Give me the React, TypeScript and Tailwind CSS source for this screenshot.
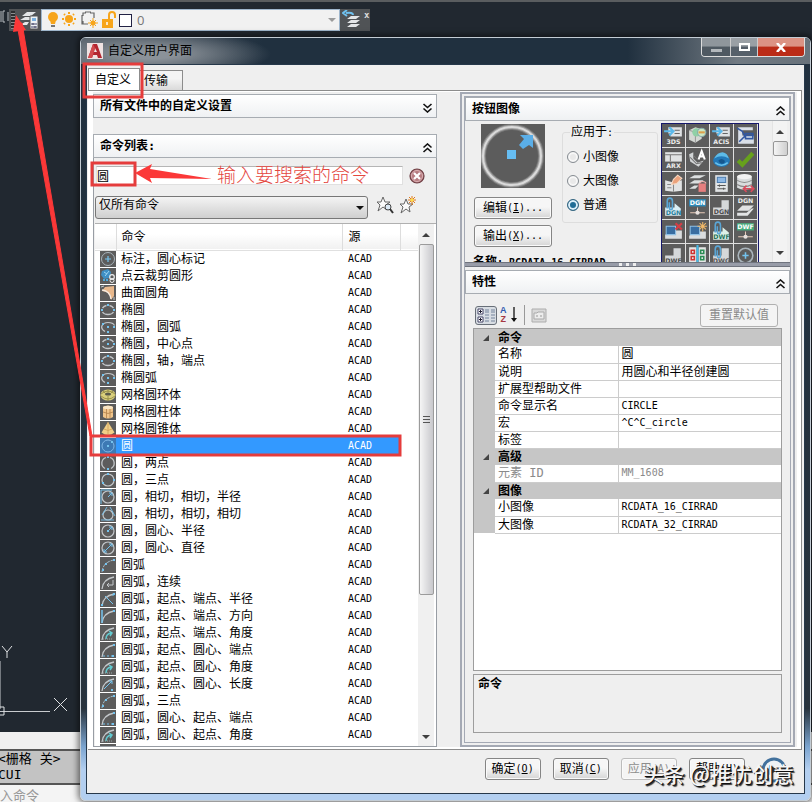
import type { ReactNode } from 'react';

type Glyph =
  | 'mark' | 'cloud' | 'fillet' | 'ellipse' | 'ellipseArc' | 'ellipseCenter'
  | 'torus' | 'cylinder' | 'cone' | 'circle' | 'circle2' | 'circle3'
  | 'ttr' | 'ttt' | 'radius' | 'diameter' | 'arc3' | 'arcCont' | 'arcRadius'
  | 'arcDir' | 'arcAngle' | 'arcEnd' | 'arcLength';

const commands: { name: string; glyph: Glyph }[] = [
  { name: '标注，圆心标记', glyph: 'mark' },
  { name: '点云裁剪圆形', glyph: 'cloud' },
  { name: '曲面圆角', glyph: 'fillet' },
  { name: '椭圆', glyph: 'ellipse' },
  { name: '椭圆，圆弧', glyph: 'ellipseArc' },
  { name: '椭圆，中心点', glyph: 'ellipseCenter' },
  { name: '椭圆，轴，端点', glyph: 'ellipse' },
  { name: '椭圆弧', glyph: 'ellipseArc' },
  { name: '网格圆环体', glyph: 'torus' },
  { name: '网格圆柱体', glyph: 'cylinder' },
  { name: '网格圆锥体', glyph: 'cone' },
  { name: '圆', glyph: 'circle' },
  { name: '圆，两点', glyph: 'circle2' },
  { name: '圆，三点', glyph: 'circle3' },
  { name: '圆，相切，相切，半径', glyph: 'ttr' },
  { name: '圆，相切，相切，相切', glyph: 'ttt' },
  { name: '圆，圆心、半径', glyph: 'radius' },
  { name: '圆，圆心、直径', glyph: 'diameter' },
  { name: '圆弧', glyph: 'arc3' },
  { name: '圆弧，连续', glyph: 'arcCont' },
  { name: '圆弧，起点、端点、半径', glyph: 'arcRadius' },
  { name: '圆弧，起点、端点、方向', glyph: 'arcDir' },
  { name: '圆弧，起点、端点、角度', glyph: 'arcAngle' },
  { name: '圆弧，起点、圆心、端点', glyph: 'arcEnd' },
  { name: '圆弧，起点、圆心、角度', glyph: 'arcAngle' },
  { name: '圆弧，起点、圆心、长度', glyph: 'arcLength' },
  { name: '圆弧，三点', glyph: 'arc3' },
  { name: '圆弧，圆心、起点、端点', glyph: 'arcEnd' },
  { name: '圆弧，圆心、起点、角度', glyph: 'arcAngle' },
];

const SELECTED = 11;

const properties = [
  {
    title: '命令',
    rows: [
      { label: '名称', value: '圆' },
      { label: '说明', value: '用圆心和半径创建圆' },
      { label: '扩展型帮助文件', value: '' },
      { label: '命令显示名', value: 'CIRCLE' },
      { label: '宏', value: '^C^C_circle' },
      { label: '标签', value: '' },
    ],
  },
  { title: '高级', rows: [{ label: '元素 ID', value: 'MM_1608', muted: true }] },
  {
    title: '图像',
    rows: [
      { label: '小图像', value: 'RCDATA_16_CIRRAD' },
      { label: '大图像', value: 'RCDATA_32_CIRRAD' },
    ],
  },
];

const BLUE = '#74c3ee';
const LIGHT = '#c3c7ca';

function Dots({ at }: { at: [number, number][] }) {
  return (
    <>
      {at.map(([x, y]) => (
        <rect key={`${x}-${y}`} x={x - 1} y={y - 1} width="2" height="2" fill={BLUE} />
      ))}
    </>
  );
}

const arc = <path d="M2 15Q3 5 14 3" fill="none" stroke={LIGHT} strokeWidth="1.3" />;
const ring = <circle cx="8" cy="8" r="6" fill="none" stroke={LIGHT} strokeWidth="1.2" />;
const oval = (
  <path
    d="M2.500 6Q4 4 6.500 3.500M9.500 3.500Q12 4 13.500 6M2.500 10Q4 12.500 8 12.500T13.500 10"
    fill="none"
    stroke={LIGHT}
    strokeWidth="1.300"
  />
);

const glyphs: Record<Glyph, ReactNode> = {
  mark: (
    <>
      <circle cx="8" cy="8" r="6.5" fill="none" stroke="#a9b4bb" />
      <path d="M8 5v6M5 8h6" stroke={BLUE} strokeWidth="1.2" />
    </>
  ),
  cloud: (
    <>
      <path d="M2 3l6-2 3 3-1 6-6 1-3-4z" fill="#3f8fc4" />
      <path d="M4 4l3 2M9 3L5 8" stroke="#9bd4f2" />
      <circle cx="12" cy="9" r="2.3" fill="none" stroke="#eee" strokeWidth="1.2" />
      <circle cx="12" cy="12.500" r="2" fill="none" stroke="#eee" />
      <path d="M3 12h6" stroke="#4fa9dc" strokeWidth="2" strokeDasharray="2 1" />
    </>
  ),
  fillet: (
    <>
      <path d="M5 2l9-1v10l-3 4q1-8-9-9z" fill="#e8b88c" />
      <path d="M2 5q8 1 9 9" fill="none" stroke="#f5eadf" strokeWidth="1.5" />
      <path d="M1 2l3-1M14 12v3" stroke={LIGHT} />
    </>
  ),
  ellipse: <>{oval}<Dots at={[[2, 8], [14, 8], [8, 3]]} /></>,
  ellipseArc: (
    <>
      <path d="M5 12.500C-1 9 2 3.500 8 3.500q5 0 6.500 3" fill="none" stroke={LIGHT} strokeWidth="1.2" />
      <Dots at={[[8, 8], [14, 8], [8, 13], [3, 5]]} />
    </>
  ),
  ellipseCenter: <>{oval}<Dots at={[[8, 8], [14, 8], [8, 3]]} /></>,
  torus: (
    <>
      <ellipse cx="8" cy="8" rx="7.500" ry="5.500" fill="#d9cf7c" />
      <ellipse cx="8" cy="7" rx="3" ry="1.600" fill="#5b5b4b" />
      <path d="M1 7q7-6 14 0M1 9q7 6 14 0M8 2v3M8 9v5M3 4l2 2M13 4l-2 2" fill="none" stroke="#8c8440" strokeWidth=".8" />
    </>
  ),
  cylinder: (
    <>
      <path d="M3 3q5-3 10 0v10q-5 3-10 0z" fill="#f0c58b" />
      <ellipse cx="8" cy="3.500" rx="5" ry="1.700" fill="#fae6c4" />
      <path d="M3 8q5 3 10 0M6.500 5v9M10 5v9" fill="none" stroke="#b3814a" strokeWidth=".8" />
    </>
  ),
  cone: (
    <>
      <path d="M8 1l6.500 10.500q-6.500 5-13 0z" fill="#f0cf88" />
      <path d="M4 8q4 3 8 0M8 1v13" fill="none" stroke="#cf9d55" strokeWidth=".8" />
    </>
  ),
  circle: <><circle cx="8" cy="8" r="6" fill="none" stroke="#7fb6e6" /><Dots at={[[8, 8], [12, 4]]} /></>,
  circle2: (
    <>
      <path d="M6 2.500a6 6 0 0 0-1 11M10 2.500a6 6 0 0 1 1 11" fill="none" stroke={LIGHT} strokeWidth="1.300" />
      <Dots at={[[8, 2], [8, 14]]} />
    </>
  ),
  circle3: <>{ring}<Dots at={[[8, 2], [3, 11], [14, 8]]} /></>,
  ttr: (
    <>
      {ring}
      <path d="M1 15V1h11M8 8l4-4M9 4h3v3" fill="none" stroke={BLUE} />
    </>
  ),
  ttt: (
    <>
      <circle cx="8" cy="9" r="5" fill="none" stroke={LIGHT} strokeWidth="1.2" />
      <path d="M1 14h13M2 9l5-8M10 1l5 9" stroke={BLUE} strokeWidth=".9" />
    </>
  ),
  radius: (
    <>
      {ring}
      <path d="M8 8l4-4M9 4h3v3" fill="none" stroke={BLUE} />
      <Dots at={[[8, 8]]} />
    </>
  ),
  diameter: (
    <>
      {ring}
      <path d="M4 12l8-8M9 4h3v3M4 9v3h3" fill="none" stroke={BLUE} />
    </>
  ),
  arc3: (
    <>
      <path d="M2 15Q3 5 14 3" fill="none" stroke="#a7bdc9" strokeDasharray="4 1" />
      <Dots at={[[3, 13], [6, 7], [14, 3]]} />
    </>
  ),
  arcCont: <>{arc}<path d="M13 6v5H7M9 9l-2 2 2 2" fill="none" stroke={LIGHT} /></>,
  arcRadius: <>{arc}<path d="M5 5l8 8M13 3v2" stroke={BLUE} /><Dots at={[[2, 14], [14, 3]]} /></>,
  arcDir: <>{arc}<path d="M2 15V2" stroke={BLUE} strokeWidth="1.500" /><Dots at={[[14, 3]]} /></>,
  arcAngle: (
    <>
      {arc}
      <path d="M6 14q0-5 5-6M9 6l3 2-2 3" fill="none" stroke="#62c9cf" strokeWidth="1.500" />
      <path d="M3 14h9" stroke="#9aa" strokeDasharray="1 1" />
    </>
  ),
  arcEnd: <>{arc}<path d="M3 14h9" stroke={BLUE} strokeDasharray="2 2" /><Dots at={[[14, 3], [13, 14]]} /></>,
  arcLength: <>{arc}<path d="M4 13l8-8M9 5h3v3" fill="none" stroke={BLUE} /><Dots at={[[12, 14]]} /></>,
};

function CommandIcon({ glyph, selected }: { glyph: Glyph; selected?: boolean }) {
  return (
    <svg viewBox="0 0 16 16" className="block size-4">
      <rect width="16" height="16" fill={selected ? '#3d79b4' : '#5c5c5c'} />
      {glyphs[glyph]}
    </svg>
  );
}

function TinyText({ y, fill = '#ececec', children }: { y: number; fill?: string; children: string }) {
  return (
    <text x="11" y={y} fill={fill} fontSize="6" fontWeight="700" textAnchor="middle" fontFamily="DejaVu Sans, sans-serif">
      {children}
    </text>
  );
}

const importFrame = (
  <>
    <path d="M6 3h13v9H8V9H6z" fill="#dfe2e4" />
    <path d="M12 6h5M12 9h5" stroke="#666" />
    <path d="M2 7h8M7 3l4 4-4 4" fill="none" stroke="#5bb8ea" strokeWidth="2" />
  </>
);
const clip = <path d="M5 12V5q0-3 2.500-3T10 5v6q0 2-1.500 2T7 11V6" fill="none" stroke="#5aa6d6" strokeWidth="1.500" />;
const sheet = <path d="M3 11h8V4h7v14H3z" fill="#d5d8da" />;

const buttonImages: ReactNode[] = [
  <>{importFrame}<TinyText y={19}>3DS</TinyText></>,
  <>
    <path d="M3 6l6-3 6 2v9l-6 4-6-3z" fill="#d4d8d4" />
    <path d="M3 6l6 2v10" fill="none" stroke="#999" />
    <circle cx="10" cy="8" r="4" fill="#8fd0a6" />
    <circle cx="15" cy="8" r="4" fill="#cde8c4" stroke="#8aa" />
    <path d="M12 8h6" stroke="#dca04c" strokeWidth="2" />
  </>,
  <>{importFrame}<TinyText y={19}>ACIS</TinyText></>,
  <>
    <path d="M4 3h14v3H8v5h11v8H4z" fill="#d9dfe8" />
    <path d="M3 4l5 3 2 4h9M5 17l6-6M11 9h7v5h-7z" fill="none" stroke="#3358a0" strokeWidth="1.500" />
  </>,
  <>
    <path d="M3 4h16v9H3z" fill="#e0e2e3" />
    <path d="M3 6.500h16M8 7v6" stroke="#777" />
    <TinyText y={19}>ARX</TinyText>
  </>,
  <>
    <path d="M3 6l4-2v6l4 4 6-2-5 6-8-5z" fill="#d2d5d6" />
    <path d="M4 9l6 6 5-1M7 7l4 4" stroke="#777" fill="none" />
    <path d="M12 11l3-8 3 8M13 8h4" fill="none" stroke="#fff" strokeWidth="2" />
  </>,
  <>
    <ellipse cx="11" cy="12" rx="8" ry="6" fill="#2379b8" />
    <path d="M4 10q3-6 8-6 5 1 6 6-7-4-14 0z" fill="#5dbbe8" />
    <path d="M8 12q3-3 6 0 1 3-3 3-3-1-3-3z" fill="#15578e" />
    <path d="M5 14q6 5 12 0" stroke="#68c1ec" fill="none" strokeWidth="1.500" />
  </>,
  <path d="M4 12l4 4L18 5" fill="none" stroke="#67a11c" strokeWidth="4" />,
  <>
    <path d="M3 8l8 2 8-2v10l-8 1-8-1z" fill="#e1e3e4" />
    <path d="M11 10v9M5 12h4M5 15h4" stroke="#888" />
    <path d="M9 12l2-5 4-4 4 3-5 5z" fill="#eba27c" stroke="#f6d9c4" />
  </>,
  <>
    <path d="M8 3h11l-6 3H3zM8 8h9l-5 3H3zM8 13h4l-3 3H3z" fill="#dcdfe0" />
    <path d="M12 11h7v8h-7z" fill="#e67f7f" />
    <path d="M13 11q0-2 3-2t3 2" fill="none" stroke="#f4b3ae" />
  </>,
  <>
    <path d="M5 3h12v16H5z" fill="#e1e4e6" />
    <path d="M7 5h8v5H7z" fill="#8cb8e6" stroke="#4c7cae" />
    <path d="M7 13h8M7 16h8M9 12v2M13 15v2" stroke="#555" />
  </>,
  <>
    <path d="M3 4v11q7 4 14 0V4z" fill="#d9dcdd" />
    <ellipse cx="10" cy="4.500" rx="7" ry="2.500" fill="#f2f2f2" />
    <path d="M3 8q7 4 14 0M3 12q7 4 14 0" fill="none" stroke="#888" />
    <path d="M9 16h10M12 13l-3 3 3 3M16 13l3 3-3 3" fill="none" stroke="#d94b5c" strokeWidth="1.500" />
  </>,
  <><path d="M3 11h9V7l6 5v7H3z" fill="#d9eef5" />{clip}<TinyText y={18} fill="#277d99">DGN</TinyText></>,
  <>
    <path d="M3 3h16v7H3z" fill="#2e8ab8" />
    <TinyText y={9} fill="#ffffff">DGN</TinyText>
    <path d="M11 11v4M4 16h14" stroke="#e6c9b8" />
    <circle cx="11" cy="16" r="2" fill="#e8e2df" />
  </>,
  <>{sheet}<TinyText y={17} fill="#4a4a4a">DGN</TinyText></>,
  <><TinyText y={7}>DGN</TinyText><path d="M8 9h11l-5 5H3z" fill="#e1e3e4" /><path d="M3 16h9l5-4h2l-6 7H3z" fill="#e1e3e4" /></>,
  <>
    <path d="M9 10h10v8H3v-4" fill="#dadddf" />
    <path d="M4 6h9v8H4z" fill="#396da1" stroke="#8dbfe5" />
    <path d="M13 3l6 6M19 3l-6 6" stroke="#d43e46" strokeWidth="2" />
  </>,
  <>
    <path d="M9 11h10v7H3v-3" fill="#dadddf" />
    <path d="M4 6h9v8H4z" fill="#396da1" stroke="#8dbfe5" />
    <path d="M16 2v9M11 6h9M13 3l6 6M19 3l-6 6" stroke="#f2b968" />
  </>,
  <><path d="M3 11h9V7l6 5v7H3z" fill="#ddf0e8" />{clip}<TinyText y={18} fill="#27755b">DWF</TinyText></>,
  <>
    <path d="M3 3h16v7H3z" fill="#48ae7e" />
    <TinyText y={9} fill="#ffffff">DWF</TinyText>
    <path d="M11 11v4M4 16h14" stroke="#e6c9b8" />
    <circle cx="11" cy="16" r="2" fill="#e8e2df" />
  </>,
  <>{sheet}<TinyText y={18} fill="#4a4a4a">DWF</TinyText></>,
  <>
    <path d="M3 3h7v16H3zM12 3h7v16h-7z" fill="#e5e6e6" />
    <path d="M5 6h3v3H5zM5 12h3v3H5z" fill="none" stroke="#cf3131" strokeWidth="1.500" />
    <path d="M14 6h3v3h-3zM14 12h3v3h-3z" fill="none" stroke="#2a8c53" strokeWidth="1.500" />
    <path d="M11 1v20" stroke="#45b9e8" strokeWidth="2" />
  </>,
  <>{sheet}{clip}<TinyText y={18} fill="#555555">DWG</TinyText></>,
  <>
    <circle cx="11" cy="11" r="7" fill="none" stroke="#a9b4bb" strokeWidth="1.500" />
    <path d="M11 8v6M8 11h6" stroke={BLUE} strokeWidth="1.500" />
  </>,
];

function Chevrons({ down }: { down?: boolean }) {
  return (
    <svg viewBox="0 0 11 10" className={down ? 'h-[10px] w-[11px] rotate-180' : 'h-[10px] w-[11px]'}>
      <path d="M1.500 4.500l4-3.500 4 3.500M1.500 9l4-3.500 4 3.500" fill="none" stroke="#111" strokeWidth="1.600" />
    </svg>
  );
}

function PanelHeader({ title, collapsed }: { title: string; collapsed?: boolean }) {
  return (
    <div className="flex h-6 shrink-0 items-center justify-between border border-[#a7acb2] bg-gradient-to-b from-white to-[#eff1f3] pr-[3px] pl-[6px]">
      <h2 className="text-[12px] leading-4 font-bold">{title}</h2>
      <button type="button" aria-label={title} className="mt-1">
        <Chevrons down={collapsed} />
      </button>
    </div>
  );
}

function DialogButton({ text, hotkey, suffix = '', disabled }: { text: string; hotkey: string; suffix?: string; disabled?: boolean }) {
  return (
    <button
      type="button"
      disabled={disabled}
      className="flex h-[22px] items-center justify-center rounded-[3px] border border-[#858585] bg-gradient-to-b from-[#f6f6f6] from-45% to-[#d5d5d5] px-[6px] whitespace-nowrap shadow-[inset_0_0_0_1px_#fafafa] disabled:border-[#bcbcbc] disabled:from-[#f4f4f4] disabled:to-[#f4f4f4] disabled:text-[#8d8d8d]"
    >
      {text}
      <span className="text-[10px]">
        (<u>{hotkey}</u>){suffix}
      </span>
    </button>
  );
}

function Arrow({ down }: { down?: boolean }) {
  return (
    <svg viewBox="0 0 8 4" className={down ? 'h-1 w-2 rotate-180' : 'h-1 w-2'}>
      <path d="M0 4l4-4 4 4z" fill="#3f3f3f" />
    </svg>
  );
}

function LayerToolbar() {
  return (
    <div className="absolute top-[9px] left-[9px] flex h-[22px] w-[361px] bg-[#505356]">
      <div className="m-[2px] w-1 bg-[repeating-linear-gradient(0deg,#8b8d8f_0_1px,#2c2e30_1px_3px)]" />
      <svg viewBox="0 0 20 20" className="mt-px ml-[2px] size-5">
        <path d="M8 2h9l-5 4H3zM6 7h8l-3 3H1zM6 12h4l-2 3H1z" fill="#e4e6e8" />
        <path d="M11 6h8v13h-8z" fill="#eef2f5" stroke="#555" />
        <path d="M13 8h4v3h-4z" fill="#79aede" />
        <path d="M12 14h6M12 17h6M14 13v2M16 16v2" stroke="#446" />
      </svg>
      <div className="ml-[2px] flex flex-1 items-center border border-[#9fb6cc] bg-[#f1f1f1] pr-[3px] pl-[5px]">
        <svg viewBox="0 0 82 18" className="h-[18px] w-[82px]">
          <circle cx="6" cy="6" r="5" fill="#f7a51b" />
          <path d="M3 9h6l-1 4H4z" fill="#f7a51b" />
          <path d="M4 15h4" stroke="#777" strokeWidth="2" />
          <circle cx="22" cy="8" r="4" fill="#f7a51b" />
          <path d="M22 1v2M22 13v2M15 8h2M27 8h2M17 3l1 1M26 12l1 1M27 3l-1 1M18 12l-1 1" stroke="#f7a51b" strokeWidth="2" />
          <path d="M36 5V2h3M43 2h4v5M36 10v3h5M35 4v9h4M38 1h6" fill="none" stroke="#666" strokeWidth="1.200" />
          <circle cx="46" cy="12" r="2.500" fill="#f7a51b" />
          <path d="M46 7v10M41 12h10M43 9l6 6M49 9l-6 6" stroke="#f7a51b" />
          <path d="M55 8h11v9H55z" fill="#f7a51b" />
          <path d="M62 8V4q0-3 3-3t3 3v3" fill="none" stroke="#f7a51b" strokeWidth="2" />
          <path d="M60 11v3" stroke="#fff" strokeWidth="1.500" />
        </svg>
        <div className="-ml-[10px] size-[13px] border border-[#222244] bg-white" />
        <span className="ml-[5px] font-['Open_Sans',sans-serif] text-[13px] text-[#777]">0</span>
        <span className="flex-1" />
        <svg viewBox="0 0 8 4" className="h-1 w-2">
          <path d="M0 0h8L4 4z" fill="#9b9b9b" />
        </svg>
      </div>
      <svg viewBox="0 0 20 20" className="mt-px ml-[2px] size-5">
        <path d="M9 6h9l-4 3H5zM9 10h9l-4 3H5zM9 14h9l-4 3H5z" fill="#e4e6e8" />
        <path d="M11 5q0-3-7-2M5 0L1 3l4 3" fill="none" stroke="#6fc0ee" strokeWidth="2" />
      </svg>
      <span className="ml-[2px] w-[6px] text-[9px] leading-3 font-bold text-[#dddddd]">x</span>
    </div>
  );
}

function CommandList() {
  return (
    <section className="flex min-h-0 flex-1 flex-col border border-[#989da4] bg-[#efefef]">
      <div className="-mx-px -mt-px">
        <PanelHeader title="命令列表:" />
      </div>
      <div className="mt-[7px] flex h-[21px] items-center pl-[2px]">
        <input
          aria-label="搜索命令"
          defaultValue="圆"
          className="h-[19px] w-[307px] border border-[#e0e0e0] border-t-[#b5b5b5] bg-white outline-none"
        />
        <button type="button" aria-label="清除" className="ml-[6px]">
          <svg viewBox="0 0 16 16" className="size-4">
            <circle cx="8" cy="8" r="7" fill="#b67b80" stroke="#6e3e43" strokeWidth="1.200" />
            <circle cx="8" cy="8" r="5.500" fill="none" stroke="#e3bfc1" strokeWidth=".8" />
            <path d="M5 5l6 6M11 5l-6 6" stroke="#fff" strokeWidth="2.200" />
          </svg>
        </button>
      </div>
      <div className="mt-[9px] flex h-[24px] items-center pl-px">
        <div className="relative flex w-[273px]">
          <select
            aria-label="过滤命令"
            className="h-[23px] w-full appearance-none rounded-[3px] border border-[#777777] bg-gradient-to-b from-[#f4f4f4] to-[#cfcfcf] pb-1 pl-[3px]"
          >
            <option>仅所有命令</option>
          </select>
          <svg viewBox="0 0 8 4" className="pointer-events-none absolute top-[10px] right-[4px] h-1 w-2">
            <path d="M0 0h8L4 4z" fill="#111" />
          </svg>
        </div>
        <button type="button" aria-label="查找命令" className="-mt-1 ml-2">
          <svg viewBox="0 0 18 18" className="size-[18px]">
            <path d="M7 1l2 5h5l-4 3 1 5-4-3-5 4 2-6-3-3h4z" fill="#fafafa" stroke="#666" />
            <circle cx="12" cy="11" r="3" fill="#dce9f5" stroke="#444" />
            <path d="M14 13l3 4" stroke="#333" strokeWidth="2" />
          </svg>
        </button>
        <button type="button" aria-label="新建命令" className="-mt-1 ml-[5px]">
          <svg viewBox="0 0 18 18" className="size-[18px]">
            <path d="M7 3l2 5h5l-4 3 1 5-4-3-5 4 2-6-3-3h4z" fill="#fafafa" stroke="#666" />
            <path d="M13 0v9M9 4h8M10 1l6 6M16 1l-6 6" stroke="#e07a1c" />
            <circle cx="13" cy="4" r="1.500" fill="#ffe23d" />
          </svg>
        </button>
      </div>
      <div className="mt-1 ml-px flex min-h-0 flex-1 border-t border-[#b0b0b0] bg-white">
        <div className="min-w-0 flex-1 overflow-hidden">
          <table className="w-full table-fixed border-collapse">
            <thead>
              <tr className="h-[26px] border-b border-[#e0e0e0] bg-gradient-to-b from-white from-40% to-[#f1f1f1] text-left">
                <th className="w-[21px] border-r border-[#dddddd]" />
                <th className="border-r border-[#dddddd] pl-[5px] font-normal">命令</th>
                <th className="w-[58px] border-r border-[#dddddd] pl-[6px] font-normal">源</th>
                <th className="w-[18px]" />
              </tr>
            </thead>
            <tbody>
              {commands.map((command, i) => (
                <tr key={command.name} className={i === SELECTED ? 'h-[17px] text-white' : 'h-[17px]'}>
                  <td className="py-0 pl-[5px]">
                    <CommandIcon glyph={command.glyph} selected={i === SELECTED} />
                  </td>
                  <td className={i === SELECTED ? 'bg-[#3399ff] py-0 pl-[5px]' : 'py-0 pl-[5px]'}>{command.name}</td>
                  <td className={i === SELECTED ? 'bg-[#3399ff] py-0 pl-[6px] text-[10px]' : 'py-0 pl-[6px] text-[10px]'}>ACAD</td>
                  <td />
                </tr>
              ))}
              <tr className="h-[17px]">
                <td className="py-0 pl-[5px]">
                  <CommandIcon glyph="arcLength" />
                </td>
              </tr>
            </tbody>
          </table>
        </div>
        <div className="mr-[2px] flex w-4 shrink-0 flex-col items-center bg-[#f0f0f0] pt-[9px] pb-[7px]">
          <Arrow />
          <div className="mt-[7px] flex w-[15px] flex-[35] flex-col items-center justify-center gap-px rounded-[2px] border border-[#9b9b9b] bg-gradient-to-r from-[#f5f5f5] to-[#c8c8cc]">
            <span className="h-px w-[7px] bg-[#555]" />
            <span className="mt-px h-px w-[7px] bg-[#555]" />
            <span className="mt-px h-px w-[7px] bg-[#555]" />
          </div>
          <div className="flex-[14]" />
          <Arrow down />
        </div>
      </div>
    </section>
  );
}

function ButtonImagePanel() {
  return (
    <section className="flex h-[165px] shrink-0 flex-col overflow-hidden">
      <PanelHeader title="按钮图像" />
      <div className="flex min-h-0 flex-1">
        <div className="flex min-w-0 flex-1 flex-col overflow-hidden pl-[9px]">
          <div className="flex shrink-0">
            <div className="flex w-[78px] shrink-0 flex-col gap-[6px] pt-[3px]">
              <svg viewBox="0 0 64 64" className="mb-[3px] ml-[7px] size-16 shrink-0">
                <rect width="64" height="64" fill="#5c5c5c" />
                <circle cx="31" cy="32" r="29" fill="none" stroke="#777" strokeWidth="6" />
                <circle cx="31" cy="32" r="29" fill="none" stroke="#a5a5a5" strokeWidth="4" />
                <circle cx="31" cy="32" r="29" fill="none" stroke="#dadada" strokeWidth="2" />
                <path d="M26 26h9v9h-9z" fill="#66bdf2" />
                <path d="M39 11h13v13l-4-3-6 4-4-4 5-6z" fill="#5aaee8" />
              </svg>
              <DialogButton text="编辑" hotkey="I" suffix="..." />
              <DialogButton text="输出" hotkey="X" suffix="..." />
            </div>
            <fieldset className="mt-[3px] ml-[10px] h-[99px] min-w-0 flex-1 rounded-[3px] border border-[#dddddd] px-1">
              <legend className="ml-[3px] px-px leading-4">应用于<span className="text-[10px]">:</span></legend>
              <div className="mt-2 grid gap-2">
                {['小图像', '大图像', '普通'].map((label) => (
                  <label key={label} className="flex h-4 items-center gap-1">
                    <input
                      type="radio"
                      name="apply"
                      defaultChecked={label === '普通'}
                      className="size-3 appearance-none rounded-full border border-[#858b91] bg-[#e9e9e9] shadow-[inset_0_0_0_2px_#f7f7f7] checked:border-[#396882] checked:bg-[#1f6c96] checked:shadow-[inset_0_0_0_2px_#dceffa]"
                    />
                    {label}
                  </label>
                ))}
              </div>
            </fieldset>
          </div>
          <p className="mt-[7px] -ml-px shrink-0 leading-4 font-bold whitespace-nowrap">
            名称<span className="text-[10px]">: RCDATA_16_CIRRAD</span>
          </p>
        </div>
        <div className="mt-[2px] ml-[3px] grid w-[98px] shrink-0 auto-rows-[24px] grid-cols-4 overflow-hidden border border-b-0 border-[#16186b]">
          {buttonImages.map((image, i) => (
            <div key={i} className="border-r border-b border-[#e0e0e0] bg-[#5c5c5c]">
              <svg viewBox="0 0 22 22" className="block size-[23px]">{image}</svg>
            </div>
          ))}
        </div>
        <div className="mr-[3px] ml-[13px] flex w-[15px] shrink-0 flex-col items-center border-l border-[#e4e4e4] bg-[#f3f3f3] pt-[9px] pb-[7px]">
          <Arrow />
          <div className="mt-[7px] h-[15px] w-[15px] rounded-[2px] border border-[#969696] bg-gradient-to-r from-[#f5f5f5] to-[#cfcfcf]" />
          <div className="flex-1" />
          <Arrow down />
        </div>
      </div>
    </section>
  );
}

function PropertyPanel() {
  return (
    <section className="flex min-h-0 flex-1 flex-col">
      <PanelHeader title="特性" />
      <div className="flex min-h-0 flex-1 flex-col px-2 pt-[9px] pb-[9px]">
        <div className="flex h-[24px] shrink-0 items-center">
          <button type="button" aria-label="按分类" className="ml-[2px] rounded-[3px] border border-[#686f78] bg-[#d8dde3]">
            <svg viewBox="0 0 20 17" className="h-[17px] w-5">
              <path d="M2 2h5v5H2zM2 10h5v5H2z" fill="#fff" stroke="#446" />
              <path d="M3 4.500h3M4.500 3v3M3 12.500h3M4.500 11v3" stroke="#223" />
              <path d="M9 3h4M9 5h4M9 8h4M9 11h4M9 14h4M15 3h4M15 5h4M15 8h4M15 11h4M15 14h4" stroke="#75849c" />
            </svg>
          </button>
          <button type="button" aria-label="按字母排序" className="ml-[3px] flex h-5 w-5 items-center">
            <span className="grid font-['Liberation_Sans',sans-serif] text-[9px] leading-[9px] font-bold">
              <span className="text-[#315bb0]">A</span>
              <span className="text-[#a63842]">Z</span>
            </span>
            <svg viewBox="0 0 8 16" className="ml-[3px] h-4 w-2">
              <path d="M4 0v14" stroke="#111" strokeWidth="1.300" />
              <path d="M1 11h6l-3 4z" fill="#111" />
            </svg>
          </button>
          <span className="ml-1 h-5 w-px bg-[#999]" />
          <button type="button" aria-label="属性页" disabled className="ml-[6px]">
            <svg viewBox="0 0 16 15" className="h-[15px] w-4">
              <path d="M1 1h14v13H1z" fill="#d9d9d9" stroke="#adadad" />
              <path d="M3 5h3l1-1h6v7H3z" fill="#ececec" stroke="#aaa" />
              <path d="M5 8h2M9 8h2" stroke="#999" />
            </svg>
          </button>
          <button
            type="button"
            disabled
            className="mr-1 ml-auto h-[23px] rounded-[3px] border border-[#b0b0b0] bg-[#f4f4f4] px-[8px] text-[#8a8a8a]"
          >
            重置默认值
          </button>
        </div>
        <div className="mt-px min-h-0 flex-1 border border-[#9d9d9d] bg-white">
          <table className="w-full table-fixed border-collapse">
            <colgroup>
              <col className="w-[21px]" />
              <col className="w-[123px]" />
              <col />
            </colgroup>
            {properties.map((group) => (
              <tbody key={group.title}>
                <tr className="h-[17px] bg-[#c6c6c6]">
                  <td className="py-0 pl-[9px]">
                    <svg viewBox="0 0 6 6" className="size-[6px]">
                      <path d="M6 0v6H0z" fill="#444" />
                    </svg>
                  </td>
                  <th colSpan={2} className="py-0 pl-[3px] text-left">{group.title}</th>
                </tr>
                {group.rows.map((row) => (
                  <tr key={row.label} className={'muted' in row ? 'h-[17px] text-[#8a8a8a]' : 'h-[17px]'}>
                    <td className="bg-[#c6c6c6]" />
                    <td className="border-r border-b border-[#cccccc] py-0 pl-[3px]">{row.label}</td>
                    <td
                      className={
                        /^[\x00-\x7f]*$/.test(row.value)
                          ? 'border-b border-[#cccccc] py-0 pl-[3px] text-[10px]'
                          : 'border-b border-[#cccccc] py-0 pl-[3px]'
                      }
                    >
                      {row.value}
                    </td>
                  </tr>
                ))}
              </tbody>
            ))}
          </table>
        </div>
        <div className="mt-[3px] h-[59px] shrink-0 border border-[#9d9d9d] px-1 pt-px leading-4 font-bold">命令</div>
      </div>
    </section>
  );
}

function CustomizeDialog() {
  return (
    <div className="absolute top-[37px] right-px bottom-px left-20 flex flex-col rounded-[6px] border border-[#c3ccd4] bg-[linear-gradient(180deg,#20303f_0%,#28333d_88%,#7ba4cf_93%,#b3cff0_96%)] px-[5px] pb-[6px] shadow-[0_0_6px_2px_#0008]">
      <header className="-mx-[5px] flex h-[26px] shrink-0 items-center rounded-t-[5px] bg-[radial-gradient(ellipse_120px_24px_at_70px_16px,#8b9299_20%,transparent_100%),linear-gradient(90deg,#505a64_0%,#20303f_25%,#20303f_75%,#717a82_90%,#68727b_100%)] pl-[6px]">
        <svg viewBox="0 0 16 16" className="size-4">
          <rect width="16" height="16" fill="#efe2e2" />
          <path d="M1 15L6 1h4l5 14h-4l-1-3H6l-1 3zM7 9h3L8 5z" fill="#b42630" />
          <path d="M6 1l2 4-3 10H1z" fill="#d34a4e" />
        </svg>
        <h1 className="ml-[5px] text-black">自定义用户界面</h1>
        <div className="mr-[5px] ml-auto flex h-[19px] self-start overflow-hidden rounded-b-[4px] border border-t-0 border-[#dddddd]">
          <button type="button" aria-label="最小化" className="flex w-7 items-end justify-center bg-gradient-to-b from-[#8f969c] from-45% to-[#4f5962] to-50% pb-1">
            <span className="h-[3px] w-[11px] bg-[#b3b8bc]" />
          </button>
          <button type="button" aria-label="最大化" className="flex w-7 items-center justify-center border-x border-[#cccccc] bg-gradient-to-b from-[#9aa0a5] from-45% to-[#56606a] to-50%">
            <span className="h-[8px] w-[11px] border-2 border-white" />
          </button>
          <button type="button" aria-label="关闭" className="flex w-[46px] items-center justify-center bg-gradient-to-b from-[#dc9384] from-45% to-[#bb2c17] to-50%">
            <svg viewBox="0 0 10 9" className="h-[9px] w-[10px]">
              <path d="M1 0l8 9M9 0L1 9" stroke="#fff" strokeWidth="2.500" />
            </svg>
          </button>
        </div>
      </header>
      <div className="flex min-h-0 flex-1 flex-col border border-[#26384a] bg-[#efefef] pt-[3px]">
        <div role="tablist" className="flex h-[22px] shrink-0 items-end pl-px">
          <button type="button" role="tab" aria-selected="true" className="h-[22px] w-[52px] border border-b-0 border-[#8c8c8c] bg-white pr-[2px]">
            自定义
          </button>
          <button type="button" role="tab" aria-selected="false" className="h-5 w-[43px] border border-b-0 border-l-0 border-[#8c8c8c] bg-gradient-to-b from-[#f4f4f4] from-40% to-[#dadada] pr-[10px]">
            传输
          </button>
        </div>
        <div className="mr-[2px] ml-px flex min-h-0 flex-1 border border-l-0 border-[#8c8c8c] bg-white pt-px pr-1 pb-[2px] pl-[5px]">
          <div className="flex min-w-0 flex-1 gap-[23px] bg-[#efefef] pr-[2px]">
            <div className="flex min-w-0 flex-[343] flex-col gap-4 pt-[2px]">
              <PanelHeader title="所有文件中的自定义设置" collapsed />
              <CommandList />
            </div>
            <div className="flex min-w-0 flex-[326] flex-col border-[2px] border-[#a4a9b4] p-[2px]">
              <div className="flex min-h-0 flex-1 flex-col border border-[#a4a9b4]">
                <ButtonImagePanel />
                <div className="flex h-[5px] shrink-0 items-center justify-center gap-1 border-y border-[#70747e] bg-[#989ca8]">
                  <span className="size-[3px] bg-[#eeeeee]" />
                  <span className="size-[3px] bg-[#eeeeee]" />
                  <span className="size-[3px] bg-[#eeeeee]" />
                </div>
                <div className="h-[3px] shrink-0" />
                <PropertyPanel />
              </div>
            </div>
          </div>
        </div>
        <footer className="flex h-[43px] shrink-0 items-start justify-end gap-3 pt-[8px] pr-[17px]">
          <DialogButton text="确定" hotkey="O" />
          <DialogButton text="取消" hotkey="C" />
          <DialogButton text="应用" hotkey="A" disabled />
          <DialogButton text="帮助" hotkey="H" />
          <button type="button" aria-label="帮助" className="ml-1 -mt-px">
            <svg viewBox="0 0 26 26" className="size-[26px]">
              <circle cx="13" cy="13" r="11" fill="#eef2f5" stroke="#42719d" strokeWidth="3" />
              <path d="M8 8l9 5-9 5z" fill="#24282b" />
            </svg>
          </button>
        </footer>
      </div>
    </div>
  );
}

function Annotations() {
  return (
    <>
      <svg viewBox="0 0 420 460" className="pointer-events-none absolute top-0 left-0 h-[460px] w-[420px]">
        <g fill="none" stroke="#e53c3c">
          <rect x="84" y="64" width="58" height="33" strokeWidth="3" />
          <rect x="92" y="163" width="43" height="22" strokeWidth="3" />
          <rect x="91" y="436" width="309" height="19" strokeWidth="3" />
        </g>
        <path d="M16 15l10 15-13 2z" fill="#fb3838" />
        <path d="M17 24l5-1 70 413h-2z" fill="#fb3838" stroke="#fb3838" strokeWidth="1" />
        <path d="M135 173l17-9-2 5 62 10-62-1 2 5z" fill="#fb3838" />
      </svg>
      <p className="pointer-events-none absolute top-[162px] left-[217px] text-[19px] leading-[26px] font-light text-[#e4473f]">
        输入要搜索的命令
      </p>
      <p className="pointer-events-none absolute right-[18px] bottom-[13px] font-['Noto_Sans_CJK_SC',sans-serif] text-[21px] leading-8 font-medium whitespace-nowrap text-[#f6f6f6] [text-shadow:1px_1px_0_#111,2px_2px_1px_#333]">
        头条 @推优创意
      </p>
    </>
  );
}

export default function App() {
  return (
    <div className="relative flex h-screen min-h-[600px] flex-col justify-end overflow-hidden border-t-2 border-[#5a5d5f] bg-[#212830] font-['DejaVu_Sans_Mono','Noto_Sans_CJK_SC',monospace] text-[12px] leading-4 text-black [&_button]:font-[inherit]">
      <svg viewBox="0 0 80 80" className="mb-2 size-20 shrink-0">
        <path d="M0 17v48M0 67.500h50" stroke="#c9cccf" fill="none" />
        <path d="M-4 63h8v8h-8z" stroke="#e0e2e4" fill="none" />
        <path d="M2 2l5 6 5-6M7 8v6M54 54l13 13M67 54L54 67" stroke="#e0e2e4" fill="none" />
      </svg>
      <div className="h-[17px] shrink-0 bg-[#f0f0f0]" />
      <div className="h-9 shrink-0 border-y-2 border-[#555] bg-[#c3c3c3] text-[13px] leading-4">
        <p className="-ml-[2px]">&lt;栅格 关&gt;</p>
        <p className="-ml-[2px]">CUI</p>
      </div>
      <div className="h-[17px] shrink-0 overflow-hidden bg-[#f4f4f4] pt-px text-[13px] leading-5 text-[#999]">入命令</div>
      <div className="absolute inset-x-0 -top-[2px] bottom-0">
        <svg viewBox="0 0 9 14" className="absolute top-[10px] left-0 h-[14px] w-[9px]">
          <path d="M1 1v11M3 1h2M3 1v11h2M8 2v9" stroke="#b9bdc1" fill="none" />
        </svg>
        <LayerToolbar />
        <CustomizeDialog />
        <Annotations />
      </div>
    </div>
  );
}
